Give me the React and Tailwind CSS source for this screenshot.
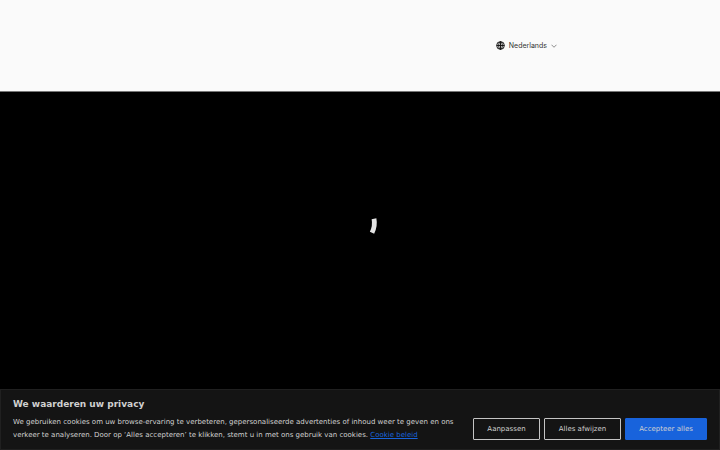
function GlobeIcon() {
  return (
    <svg className="size-[9px] shrink-0" viewBox="0 0 18 18" fill="none" stroke="#111111" strokeWidth="1.9" aria-hidden="true">
      <circle cx="9" cy="9" r="7.7" />
      <ellipse cx="9" cy="9" rx="3.7" ry="7.7" />
      <path d="M9 1.3v15.4M1.3 9h15.4" />
    </svg>
  );
}

function LanguageMenu() {
  return (
    <button
      type="button"
      aria-haspopup="listbox"
      className="flex items-center font-[Inter,sans-serif] text-[7px] leading-3 text-[#333333]"
    >
      <GlobeIcon />
      <span className="ml-1">Nederlands</span>
      <svg className="ml-1 h-1 w-1.5" viewBox="0 0 12 8" fill="none" stroke="#444444" strokeWidth="1.2" aria-hidden="true">
        <path d="M1 1.5l5 5 5-5" />
      </svg>
    </button>
  );
}

function Spinner() {
  return (
    <svg className="size-8 overflow-visible" viewBox="0 0 32 32" fill="none" role="status" aria-label="Laden">
      <path d="M30 9.8Q31.4 17 28 23.8" stroke="#e4e4e4" strokeWidth="4.8" />
    </svg>
  );
}

const outlined = "border-[#c4c4c4] bg-transparent";
const filled = "border-[#1863dc] bg-[#1863dc]";

function BannerButton({ children, tone }) {
  return (
    <button type="button" className={`h-[22px] rounded-[1px] border px-[13px] text-[7px] leading-3 whitespace-nowrap text-[#d0d0d0] ${tone}`}>
      {children}
    </button>
  );
}

function CookieBanner() {
  return (
    <section
      aria-labelledby="cookie-title"
      className="fixed inset-x-0 bottom-0 border border-[#202020] bg-[#141414] px-3 pt-2 pb-[7px] font-['DejaVu_Sans',sans-serif] text-[#d0d0d0]"
    >
      <h2 id="cookie-title" className="text-[9px] leading-3 font-bold">We waarderen uw privacy</h2>
      <div className="mt-1.5 flex items-center gap-4">
        <p className="min-w-0 flex-1 text-[7px] leading-[13px]">
          We gebruiken cookies om uw browse-ervaring te verbeteren, gepersonaliseerde advertenties of inhoud weer te geven en ons
          verkeer te analyseren. Door op ‘Alles accepteren’ te klikken, stemt u in met ons gebruik van cookies.{" "}
          <a href="#cookie-beleid" className="text-[#1863dc] underline">Cookie beleid</a>
        </p>
        <div className="grid shrink-0 grid-cols-[67px_77px_82px] gap-1">
          <BannerButton tone={outlined}>Aanpassen</BannerButton>
          <BannerButton tone={outlined}>Alles afwijzen</BannerButton>
          <BannerButton tone={filled}>Accepteer alles</BannerButton>
        </div>
      </div>
    </section>
  );
}

export default function App() {
  return (
    <div className="flex min-h-screen flex-col bg-black">
      <header className="flex h-[92px] items-center justify-end border-b border-[#777777] bg-[#fafafa] pr-[163px]">
        <LanguageMenu />
      </header>
      <main className="grow" />
      <div className="fixed inset-0 flex items-center justify-center">
        <Spinner />
      </div>
      <CookieBanner />
    </div>
  );
}
